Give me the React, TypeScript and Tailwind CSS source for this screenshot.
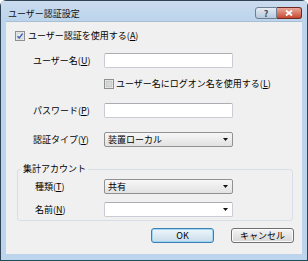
import React from "react";

function CheckBox({ checked }: { checked?: boolean }) {
    return (
        <svg width="10" height="10" viewBox="0 0 10 10" className="shrink-0">
            <rect x="0.5" y="0.5" width="9" height="9" fill="#f4f4f4" stroke="#8e8f8f" />
            <rect x="2" y="2" width="6" height="6" fill={checked ? "#e6eef7" : "#d6d6d6"} stroke="#b5b8bd" strokeWidth="0.6" />
            {checked && <path d="M2.6 5.2 L4.3 7 L7.6 2.6" fill="none" stroke="#3d5da8" strokeWidth="1.4" />}
        </svg>
    );
}

function TextBox() {
    return <div className="w-[129px] h-[15px] bg-white border border-[#c9ccd2] border-t-[#abadb3] rounded-[2px]" />;
}

function Select({ value, editable }: { value?: string; editable?: boolean }) {
    return (
        <div
            className={
                editable
                    ? "w-[129px] h-[15px] flex items-center justify-between pl-[3px] pr-[4px] border border-[#c9ccd2] border-t-[#abadb3] rounded-[2px] bg-white"
                    : "w-[129px] h-[15px] flex items-center justify-between pl-[3px] pr-[4px] border border-[#8f9192] rounded-[2px] bg-gradient-to-b from-[#f7f7f7] to-[#e2e2e2]"
            }
        >
            <span className="leading-none">{value}</span>
            <svg width="5" height="3" viewBox="0 0 5 3">
                <path d="M0 0 H5 L2.5 3 Z" fill="#111" />
            </svg>
        </div>
    );
}

export default function App() {
    return (
        <div className="w-[308px] h-[261px] flex flex-col bg-[#bcd4ec] border border-[#2f4354] border-b-[#1b4d5c] rounded-t-[6px] font-['Noto_Sans_CJK_JP',sans-serif] text-[9px] text-black">
            <div className="h-[20px] flex items-start justify-between pl-[7px] pr-[5px] bg-gradient-to-b from-[#cadcee] to-[#bcd4ec]">
                <span className="mt-[6px] leading-[14px] text-[#111]">ユーザー認証設定</span>
                <div className="flex mt-[6px]">
                    <div className="w-[22px] h-[12px] flex items-center justify-center border border-[#6d7f91] rounded-l-[3px] bg-gradient-to-b from-[#e4ecf5] to-[#b7c8da] text-[9px] leading-none font-bold text-[#394b5c]">
                        ?
                    </div>
                    <div className="w-[25px] h-[12px] flex items-center justify-center border border-[#6e2a22] border-l-0 rounded-r-[3px] bg-gradient-to-b from-[#e9a99b] to-[#c5472e]">
                        <svg width="8" height="6" viewBox="0 0 8 6">
                            <path d="M1 0.5 L7 5.5 M7 0.5 L1 5.5" stroke="#fff" strokeWidth="1.8" />
                        </svg>
                    </div>
                </div>
            </div>
            <div className="mx-[5px] mb-[6px] flex-1 flex flex-col bg-[#f0f0f0] border-t border-[#a9bdd3]">
                <div className="mt-[8px] ml-[9px] h-[11px] flex items-center gap-[3px]">
                    <CheckBox checked />
                    <span>ユーザー認証を使用する(<u>A</u>)</span>
                </div>

                <div className="mt-[12px] pl-[27px] flex items-center">
                    <span className="w-[71px]">ユーザー名(<u>U</u>)</span>
                    <TextBox />
                </div>

                <div className="mt-[11px] pl-[98px] h-[10px] flex items-center gap-[2px]">
                    <CheckBox />
                    <span>ユーザー名にログオン名を使用する(<u>L</u>)</span>
                </div>

                <div className="mt-[14px] pl-[27px] flex items-center">
                    <span className="w-[71px]">パスワード(<u>P</u>)</span>
                    <TextBox />
                </div>

                <div className="mt-[14px] pl-[27px] flex items-center">
                    <span className="w-[71px]">認証タイプ(<u>Y</u>)</span>
                    <Select value="装置ローカル" />
                </div>

                <fieldset className="mt-[16px] ml-[11px] w-[276px] border border-[#d5dfe5] rounded-[3px] pb-[3px]">
                    <legend className="ml-[3px] px-[2px] leading-[12px]">集計アカウント</legend>
                    <div className="mt-[4px] pl-[17px] flex items-center">
                        <span className="w-[69px]">種類(<u>T</u>)</span>
                        <Select value="共有" />
                    </div>
                    <div className="mt-[8px] pl-[17px] flex items-center">
                        <span className="w-[69px]">名前(<u>N</u>)</span>
                        <Select editable />
                    </div>
                </fieldset>

                <div className="mt-[7px] pr-[8px] flex justify-end gap-[17px]">
                    <button className="w-[63px] h-[15px] flex items-center justify-center border border-[#3c7fb1] rounded-[3px] bg-gradient-to-b from-[#eef6fc] to-[#c9dcea] shadow-[inset_0_0_0_1px_#9fd5f5] leading-none">
                        OK
                    </button>
                    <button className="w-[63px] h-[15px] flex items-center justify-center border border-[#707070] rounded-[3px] bg-gradient-to-b from-[#f4f4f4] to-[#d6d6d6] shadow-[inset_0_0_0_1px_#fcfcfc] leading-none">
                        キャンセル
                    </button>
                </div>
            </div>
        </div>
    );
}
